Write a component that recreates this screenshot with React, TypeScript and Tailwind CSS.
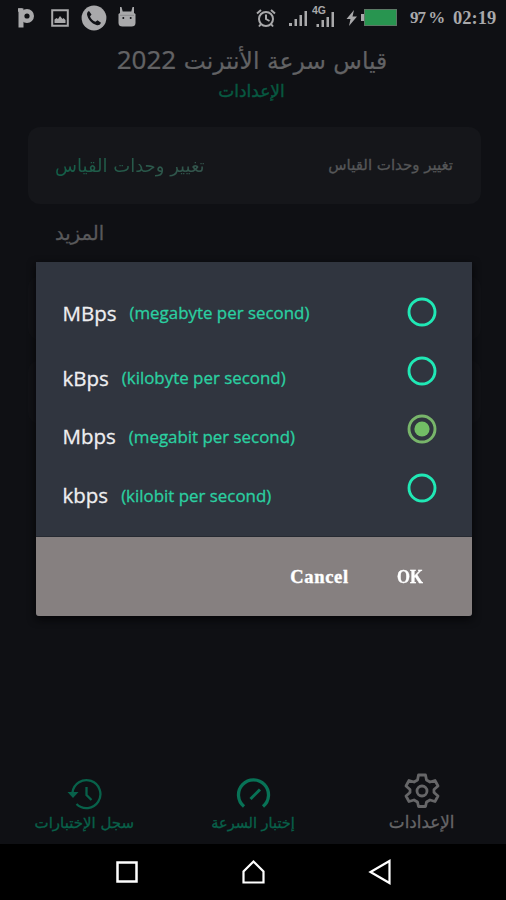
import type { ReactNode } from 'react';

const units = [
  { name: 'MBps', label: '(megabyte per second)' },
  { name: 'kBps', label: '(kilobyte per second)' },
  { name: 'Mbps', label: '(megabit per second)', checked: true },
  { name: 'kbps', label: '(kilobit per second)' },
];

function Radio({ checked }: { checked?: boolean }) {
  return (
    <svg width="30" height="30" viewBox="0 0 30 30" fill="none">
      <circle cx="15" cy="15" r="13" stroke={checked ? '#78b56a' : '#20e8b5'} strokeWidth="2.9" />
      {checked && <circle cx="15" cy="15" r="7.6" fill="#72bd65" />}
    </svg>
  );
}

function StatusBar() {
  return (
    <header className="flex h-[35px] items-center pl-[17px] pr-[9px] text-[#a9a9ab]">
      <svg width="18" height="22" viewBox="0 0 18 22" fill="none" stroke="currentColor">
        <path d="M1 3h4.500" strokeWidth="3.500" />
        <path d="M4 1.500v19" strokeWidth="5" />
        <circle cx="10" cy="9" r="4.800" strokeWidth="4.400" />
      </svg>
      <svg className="ml-4" width="18" height="18" viewBox="0 0 18 18" fill="none" stroke="currentColor">
        <path d="M1.200 1.200h15.600v15.600H1.200z" strokeWidth="2" />
        <path d="M3.500 14v-3.500l2-1.500 1.500 1 2-3 2.500 3 1-1 2 2v3z" fill="currentColor" stroke="none" />
      </svg>
      <svg className="ml-3" width="26" height="26" viewBox="0 0 26 26">
        <circle cx="13" cy="13" r="12.400" fill="currentColor" />
        <path d="M8 6l2.500 3.500L9 11.500c1 2.500 3 4.400 5.500 5.300l2-1.600 3.500 2.500c-.8 2.200-2.600 2.800-4.600 2.300C10.500 18.500 7 14.500 6 9.500c0-2 .8-3 2-3.500z" fill="#111216" />
      </svg>
      <svg className="mb-0.5 ml-[10px]" width="20" height="22" viewBox="0 0 20 22" fill="currentColor">
        <path d="M3 1h1.500l1.200 4.500h8.600L15.500 1H17v6l1.500 1v9c0 2.500-1.500 3.500-4 3.500h-9C3 20.500 1.500 19.500 1.500 17V8L3 7z" />
        <circle cx="6.300" cy="12" r="1" fill="#111216" />
        <circle cx="13.700" cy="12" r="1" fill="#111216" />
        <path d="M3 9.300h14" stroke="#77777a" strokeWidth=".6" />
      </svg>
      <svg className="ml-auto" width="20" height="20" viewBox="0 0 20 20" fill="none" stroke="currentColor" strokeWidth="2">
        <circle cx="10" cy="11" r="7" />
        <path d="M10 6.500V11l3.500 2M1 5.500L5 2M19 5.500L15 2M5 16l-2 2.500M15 16l2 2.500" />
      </svg>
      <svg className="ml-[13px]" width="19" height="18" viewBox="0 0 19 18" fill="currentColor">
        <path d="M0 14h3v3H0zM5.500 10h2.500v7H5.500zM10.500 6H13v11h-2.500zM15.500 2H18v15h-2.500z" />
      </svg>
      <div className="relative ml-[6px] pt-1">
        <svg width="22" height="18" viewBox="0 0 22 18" fill="currentColor">
          <path d="M2.500 13H5v3H2.500zM7.500 9H10v7H7.500zM12.500 6H15v10h-2.500zM17.500 1H20v15h-2.500z" />
        </svg>
        <span className="absolute -top-[2px] -left-[2px] font-['Liberation_Sans'] text-[10.500px] leading-[10px] font-bold">4G</span>
      </div>
      <svg className="ml-[10px]" width="12" height="16" viewBox="0 0 12 16" fill="currentColor">
        <path d="M8 0L.5 9h4L3 16l8-9.500H6.500z" />
      </svg>
      <span className="ml-[3px] h-[7px] w-[3px] bg-current" />
      <span className="h-[17px] w-[33px] border border-[#5c7966] bg-[#289550]" />
      <span className="ml-[13px] w-[34px] font-['Liberation_Serif'] text-[17px] leading-5 font-bold tracking-[-1px] whitespace-nowrap">97 %</span>
      <span className="ml-[9px] w-[44px] font-['Liberation_Serif'] text-[18.500px] leading-5 font-bold whitespace-nowrap">02:19</span>
    </header>
  );
}

function Tab({ label, icon, className }: { label: string; icon: ReactNode; className: string }) {
  return (
    <div className={`flex flex-1 flex-col items-center whitespace-nowrap ${className}`}>
      {icon}
      <span className="mt-px leading-6 [-webkit-text-stroke:0.3px]">{label}</span>
    </div>
  );
}

function TabBar() {
  return (
    <nav dir="ltr" className="flex h-[74px] text-[#08614a]">
      <Tab
        className="pt-2 text-[15px]"
        label="سجل الإختبارات"
        icon={
          <svg width="36" height="32" viewBox="0 0 36 32" fill="none" stroke="currentColor" strokeWidth="2.300">
            <path d="M6.500 14.500a14 14 0 1 1 4 11.500M20.500 9v8l5 5" />
            <path d="M1.500 14h11l-5.500 6z" fill="currentColor" stroke="none" />
          </svg>
        }
      />
      <Tab
        className="pt-2 text-[14.500px]"
        label="إختبار السرعة"
        icon={
          <svg width="36" height="32" viewBox="0 0 36 32" fill="none" stroke="#087256">
            <path d="M9 28.500a15 15 0 1 1 19 0" strokeWidth="3.300" />
            <path d="M15.500 21L25 11.500" strokeWidth="3" />
          </svg>
        }
      />
      <Tab
        className="pt-[3px] text-[16.800px] text-[#666668]"
        label="الإعدادات"
        icon={
          <svg width="36" height="36" viewBox="0 0 36 36" fill="none" stroke="currentColor" strokeWidth="2.800" strokeLinejoin="round">
            <path d="M14.500 2h7l1 5 3.500 2 5-1.500 3 5.500-4 3.500v3l4 3.500-3 5.500-5-1.500-3.500 2-1 4.500h-7l-1-4.500-3.500-2-5 1.500-3-5.500 4-3.500v-3l-4-3.500 3-5.500L10 9l3.500-2z" />
            <circle cx="18" cy="18" r="5" />
          </svg>
        }
      />
    </nav>
  );
}

function UnitDialog() {
  return (
    <section dir="ltr" className="absolute top-[262px] left-9 flex h-[354px] w-[436px] flex-col overflow-hidden rounded-b-[3px] bg-[#30353f] shadow-[0_3px_8px_#050507]">
      <div className="flex h-[275px] justify-between border-b border-[#262a32] pr-[35px] pl-[26.500px] font-['Open_Sans']">
        <div className="flex flex-col pt-[35px]">
          {units.map((unit) => (
            <div key={unit.name} className="mb-[26.600px] flex h-8 shrink-0 items-center gap-[13px] whitespace-nowrap first:mb-[33px]">
              <span className="text-[20.500px] text-[#eeeef0] [-webkit-text-stroke:0.3px]">{unit.name}</span>
              <span className="text-[16.900px] text-[#2bd0a1] [-webkit-text-stroke:0.3px]">{unit.label}</span>
            </div>
          ))}
        </div>
        <div className="flex flex-col gap-[28.500px] pt-[35px]">
          {units.map((unit) => (
            <Radio key={unit.name} checked={unit.checked} />
          ))}
        </div>
      </div>
      <div className="flex flex-1 items-center justify-end bg-[#868080] pt-0.5 pr-[49px] font-['Liberation_Serif'] text-[18.500px] font-bold text-white">
        <button className="w-[59px] tracking-[0.700px] [-webkit-text-stroke:0.4px]">Cancel</button>
        <button className="ml-[48px] w-[26px] origin-left scale-x-90 text-left [-webkit-text-stroke:0.4px]">OK</button>
      </div>
    </section>
  );
}

export default function App() {
  return (
    <main dir="rtl" className="relative flex h-[900px] w-[506px] flex-col overflow-hidden bg-[#0f1014] font-['DejaVu_Sans',sans-serif]">
      <div dir="ltr">
        <StatusBar />
      </div>
      <div className="flex h-[92px] flex-col items-center whitespace-nowrap">
        <h1 className="mt-1 mr-[2px] h-10 text-[23.400px] leading-10 text-[#626264] [-webkit-text-stroke:0.2px]">
          قياس سرعة الأنترنت <span className="font-['Noto_Sans'] text-[26px]">2022</span>
        </h1>
        <h2 className="mr-[3px] text-[17px] leading-6 text-[#075941] [-webkit-text-stroke:0.4px]">الإعدادات</h2>
      </div>
      <div className="mx-[25px] flex h-[77px] w-[453px] items-center justify-between rounded-xl bg-[#15161a] pr-7 pl-[27px] whitespace-nowrap">
        <span className="text-[15px] text-[#555658] [-webkit-text-stroke:0.3px]">تغيير وحدات القياس</span>
        <span className="bg-gradient-to-l from-[#34544c] to-[#115f48] bg-clip-text text-[18px] text-transparent">تغيير وحدات القياس</span>
      </div>
      <p className="mt-3 pl-[55px] text-left text-[19.500px] leading-9 text-[#59595b] [-webkit-text-stroke:0.3px]">المزيد</p>
      <div className="mt-6 mr-[25px] h-[64px] w-[453px] rounded-xl bg-[#111216]" />
      <div className="mt-5 mr-[25px] h-[64px] w-[453px] rounded-xl bg-[#111216]" />
      <div className="mt-auto">
        <TabBar />
      </div>
      <footer dir="ltr" className="flex h-14 shrink-0 items-center justify-between bg-black pr-[112px] pl-[113px]">
        <svg width="28" height="28" viewBox="0 0 28 28" fill="none" stroke="white" strokeWidth="2.500">
          <path d="M4.500 4.500h19v19h-19z" />
        </svg>
        <svg width="28" height="28" viewBox="0 0 28 28" fill="none" stroke="white" strokeWidth="2.200">
          <path d="M3.500 24.500V13.500L13.500 3.500l10 10v11z" />
        </svg>
        <svg width="28" height="28" viewBox="0 0 28 28" fill="none" stroke="white" strokeWidth="2.200">
          <path d="M23.500 3v22L4.500 14z" />
        </svg>
      </footer>
      <UnitDialog />
    </main>
  );
}
